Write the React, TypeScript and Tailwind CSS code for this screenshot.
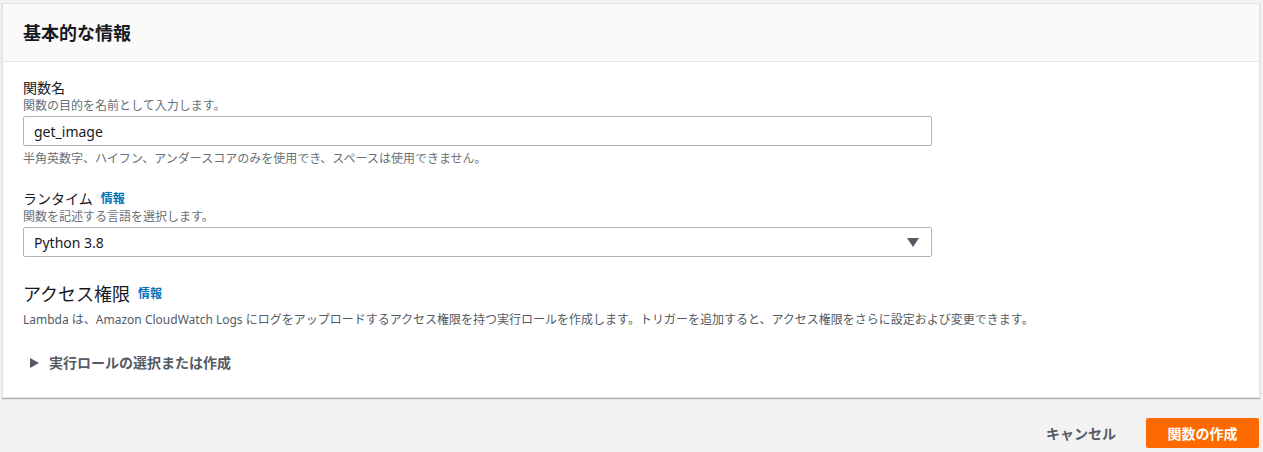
const Info = () => (
  <span className="ml-2 text-[12px] font-bold text-[#0073bb]">情報</span>
)

const App = () => {
  return (
    <div
      className="w-[1263px] h-[452px] bg-[#f2f2f2] pt-[3px] pl-[2px] pr-[3px] text-[#16191f]"
      style={{ fontFamily: '"Noto Sans", "Noto Sans CJK JP", sans-serif' }}
    >
      <div className="bg-white border border-[#e4e4e4] shadow-[0_1px_1px_0_rgba(0,28,36,0.3)]">
        <div className="h-[58px] bg-[#fafafa] border-b border-[#e4e4e4] flex items-center px-5">
          <h2 className="text-[18px] font-bold leading-none">基本的な情報</h2>
        </div>
        <div className="px-5 pt-[16px] pb-[24px]">
          <div className="flex flex-col">
            <span className="text-[14px] leading-[20px]">関数名</span>
            <span className="text-[12px] leading-[16px] text-[#687078]">関数の目的を名前として入力します。</span>
            <div className="mt-[2px] w-[909px] h-[30px] border border-[#aab7b8] rounded-[2px] flex items-center px-[10px] text-[14px]">
              get_image
            </div>
            <span className="mt-[5px] text-[12px] leading-[16px] text-[#687078]">
              半角英数字、ハイフン、アンダースコアのみを使用でき、スペースは使用できません。
            </span>
          </div>

          <div className="flex flex-col mt-[22px]">
            <span className="text-[14px] leading-[20px] flex items-center">
              ランタイム
              <Info />
            </span>
            <span className="text-[12px] leading-[16px] text-[#687078]">関数を記述する言語を選択します。</span>
            <div className="mt-[2px] w-[909px] h-[30px] border border-[#aab7b8] rounded-[2px] flex items-center justify-between pl-[10px] pr-[12px] text-[14px]">
              <span>Python 3.8</span>
              <svg width="12" height="9" viewBox="0 0 12 9">
                <path d="M0 0h12L6 9z" fill="#545b64" />
              </svg>
            </div>
          </div>

          <div className="flex flex-col mt-[25px]">
            <span className="text-[18px] leading-[24px] flex items-center">
              アクセス権限
              <Info />
            </span>
            <span className="mt-[6px] text-[12px] leading-[16px] text-[#545b64]">
              Lambda は、Amazon CloudWatch Logs にログをアップロードするアクセス権限を持つ実行ロールを作成します。トリガーを追加すると、アクセス権限をさらに設定および変更できます。
            </span>
          </div>

          <div className="mt-[24px] flex items-center gap-[10px] pl-[7px] text-[14px] font-bold text-[#545b64]">
            <svg width="9" height="10" viewBox="0 0 9 10">
              <path d="M0 0l9 5-9 5z" fill="#545b64" />
            </svg>
            <span>実行ロールの選択または作成</span>
          </div>
        </div>
      </div>

      <div className="flex justify-end items-center gap-[10px] mt-[20px] pr-[1px]">
        <button className="px-5 h-[30px] text-[14px] font-bold text-[#545b64]">キャンセル</button>
        <button className="w-[113px] h-[30px] rounded-[2px] bg-[#ff6a00] text-white text-[14px] font-bold">
          関数の作成
        </button>
      </div>
    </div>
  )
}

export default App
